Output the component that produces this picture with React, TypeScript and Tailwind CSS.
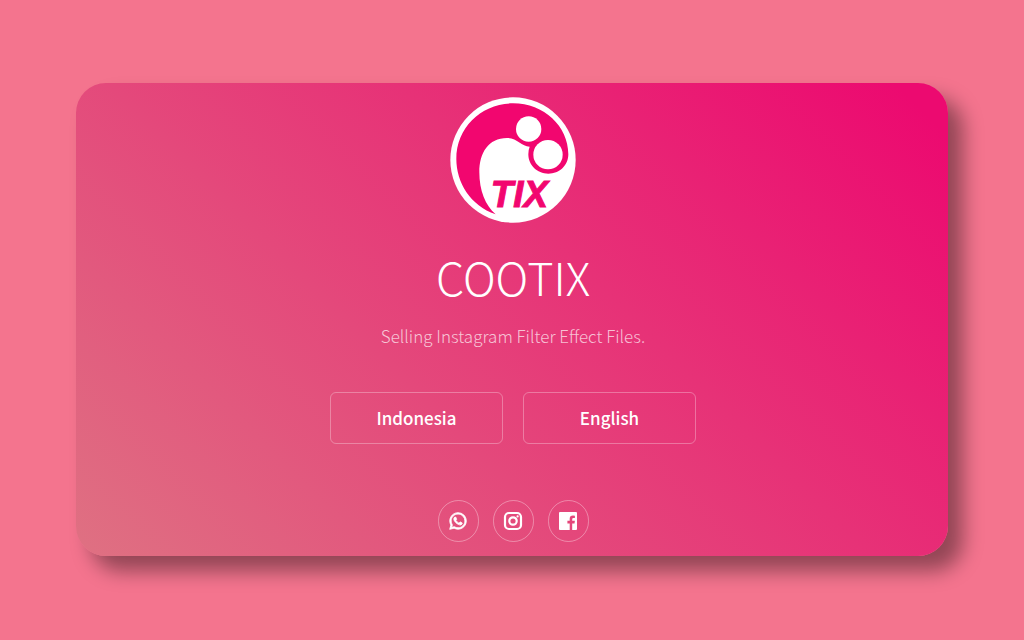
import React from "react";

const languages = ["Indonesia", "English"];

function Logo() {
  return (
    <svg viewBox="30 22 378 378" className="size-[126px]" role="img" aria-label="Cootix logo">
      <circle cx="219" cy="211" r="188" fill="#fff" />
      <path
        fill="#f2066f"
        d="M167 374C91 348 49 278 49 208C49 112 126 41 219 41C312 41 385 110 385 194C385 228 358 252 325 252C291 252 265 226 265 194Q265 180 269 171C244 171 232 145 201 145C145 145 118 190 118 248C118 302 136 348 167 374Z"
      />
      <circle cx="266" cy="118" r="38" fill="#fff" />
      <circle cx="324" cy="195" r="44" fill="#fff" />
      <text
        x="238"
        y="352"
        textAnchor="middle"
        fill="#f2066f"
        stroke="#f2066f"
        strokeWidth="3"
        fontSize="110"
        fontWeight="700"
        fontStyle="italic"
        fontFamily="Liberation Sans, sans-serif"
      >
        TIX
      </text>
    </svg>
  );
}

function WhatsApp() {
  return (
    <svg viewBox="0 0 24 24" className="size-5" fill="currentColor" aria-hidden="true">
      <path d="M19.05 4.91A9.816 9.816 0 0 0 12.04 2c-5.46 0-9.91 4.45-9.91 9.91 0 1.75.46 3.45 1.32 4.95L2.05 22l5.25-1.38c1.45.79 3.08 1.21 4.74 1.21 5.46 0 9.91-4.45 9.91-9.91 0-2.65-1.03-5.14-2.9-7.01zm-7.01 15.24c-1.48 0-2.93-.4-4.2-1.15l-.3-.18-3.12.82.83-3.04-.2-.31a8.264 8.264 0 0 1-1.26-4.38c0-4.54 3.7-8.24 8.24-8.24 2.2 0 4.27.86 5.82 2.42a8.183 8.183 0 0 1 2.41 5.83c.02 4.54-3.68 8.23-8.22 8.23zm4.52-6.16c-.25-.12-1.47-.72-1.69-.81-.23-.08-.39-.12-.56.12-.17.25-.64.81-.78.97-.14.17-.29.19-.54.06-.25-.12-1.05-.39-1.99-1.23-.74-.66-1.23-1.47-1.38-1.72-.14-.25-.02-.38.11-.51.11-.11.25-.29.37-.43s.17-.25.25-.41c.08-.17.04-.31-.02-.43s-.56-1.34-.76-1.84c-.2-.48-.41-.42-.56-.43h-.48c-.17 0-.43.06-.66.31-.22.25-.86.85-.86 2.07s.89 2.4 1.01 2.56c.12.17 1.75 2.67 4.23 3.74 2.48 1.07 2.48.71 2.93.67.45-.04 1.47-.6 1.67-1.18.21-.58.21-1.07.14-1.18s-.22-.16-.47-.28z" stroke="currentColor" strokeWidth="1" />
    </svg>
  );
}

function Instagram() {
  return (
    <svg viewBox="0 0 20 20" className="size-5" fill="none" stroke="currentColor" strokeWidth="2.2" aria-hidden="true">
      <rect x="2" y="2" width="16" height="16" rx="4" />
      <circle cx="10" cy="10" r="3.7" />
      <circle cx="14.6" cy="5.4" r="1.1" fill="currentColor" stroke="none" />
    </svg>
  );
}

function Facebook() {
  return (
    <svg viewBox="0 0 20 20" className="size-5" fill="currentColor" aria-hidden="true">
      <path d="M2 1H18Q19 1 19 2V18Q19 19 18 19H14.2V12.4H16.5L16.9 9.8H14.2V8.2Q14.2 7 15.4 7H16.9V4.7Q16 4.6 15 4.6Q11.7 4.6 11.7 7.8V9.8H9.4V12.4H11.7V19H2Q1 19 1 18V2Q1 1 2 1Z" />
    </svg>
  );
}

const socials = [
  { label: "WhatsApp", Icon: WhatsApp },
  { label: "Instagram", Icon: Instagram },
  { label: "Facebook", Icon: Facebook },
];

export default function App() {
  return (
    <div className="flex min-h-screen flex-col justify-center bg-[#f4748e] px-19 pb-px font-['Noto_Sans_CJK_JP',sans-serif] text-white">
      <main className="flex flex-col items-center rounded-[30px] bg-[linear-gradient(45deg,#df7082_1%,#ec0a70_96%)] pt-3.5 pb-3.5 pl-0.5 shadow-[15px_15px_20px_rgba(0,0,0,0.4)]">
        <Logo />
        <h1 className="mt-[22px] text-[45px] leading-16 font-light">COOTIX</h1>
        <p className="mt-[13px] text-[17px] leading-7 font-light text-white/70">
          Selling Instagram Filter Effect Files.
        </p>
        <div className="mt-[42px] flex gap-5">
          {languages.map((name) => (
            <button
              key={name}
              type="button"
              className="h-[52px] w-[173px] rounded-md border border-white/30 text-[17px] font-medium"
            >
              {name}
            </button>
          ))}
        </div>
        <nav className="mt-14 flex gap-3.5" aria-label="Social media">
          {socials.map(({ label, Icon }) => (
            <a
              key={label}
              href="#"
              aria-label={label}
              className="flex h-[42px] w-[41px] items-center justify-center rounded-full border border-white/35"
            >
              <Icon />
            </a>
          ))}
        </nav>
      </main>
    </div>
  );
}
